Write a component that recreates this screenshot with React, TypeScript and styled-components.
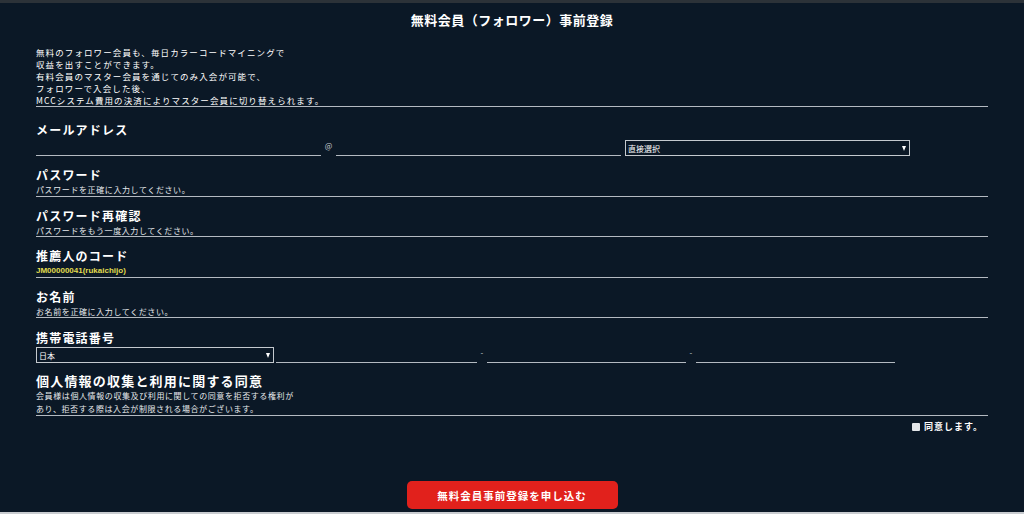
import styled, { createGlobalStyle } from "styled-components";

const GlobalStyle = createGlobalStyle`
   html, body {
      margin: 0;
      padding: 0;
      background: #0b1826;
   }
   body {
      font-family: "Noto Sans CJK JP", "Noto Sans", sans-serif;
      color: #ffffff;
   }
   * { box-sizing: border-box; }
`;

const Page = styled.div`
   height: 514px;
   background: #0b1826;
   border-top: 3px solid #2c3238;
   border-bottom: 2px solid #c9ccd0;
   display: flex;
   flex-direction: column;
   overflow: hidden;
`;

const Title = styled.h1`
   margin: 9px 0 0;
   text-align: center;
   font-size: 13px;
   line-height: 16px;
   font-weight: 700;
   letter-spacing: 0.5px;
`;

const Form = styled.div`
   padding: 0 36px;
   display: flex;
   flex-direction: column;
`;

const Intro = styled.p`
   margin: 18px 0 0;
   font-size: 8.5px;
   line-height: 12px;
   letter-spacing: 1.1px;
   border-bottom: 1px solid #b4bac1;
`;

const Field = styled.div<{ $top?: number; $line?: boolean }>`
   padding-top: ${p => p.$top ?? 12}px;
   border-bottom: ${p => (p.$line === false ? "none" : "1px solid #b4bac1")};
`;

const Label = styled.div<{ $size?: number }>`
   font-size: ${p => p.$size ?? 12}px;
   line-height: 14px;
   font-weight: 700;
   letter-spacing: 1.2px;
`;

const Sub = styled.div<{ $lh?: number }>`
   margin-top: 2px;
   font-size: 8px;
   line-height: ${p => p.$lh ?? 11.5}px;
   letter-spacing: 0.6px;
   color: #e6e9ec;
`;

const Code = styled.div`
   margin-top: 2px;
   font-family: "Liberation Sans", Arial, sans-serif;
   font-size: 8px;
   line-height: 11.5px;
   font-weight: 700;
   color: #e2dc4e;
`;

const InputRow = styled.div<{ $top?: number }>`
   display: flex;
   align-items: flex-end;
   margin-top: ${p => p.$top ?? 3}px;
`;

const Line = styled.div<{ $w: number }>`
   width: ${p => p.$w}px;
   height: 15px;
   border-bottom: 1px solid #b4bac1;
`;

const Sep = styled.span<{ $w: number }>`
   width: ${p => p.$w}px;
   text-align: center;
   font-size: 8px;
   line-height: 12px;
   align-self: flex-start;
   color: #c8cdd2;
`;

const Select = styled.div<{ $w: number }>`
   width: ${p => p.$w}px;
   height: 16px;
   border: 1px solid #c4c9ce;
   display: flex;
   align-items: center;
   justify-content: space-between;
   padding: 0 3px 0 2px;
   font-size: 8px;
   color: #ffffff;
   background: #0b1826;
   &::after {
      content: "";
      border-left: 2.5px solid transparent;
      border-right: 2.5px solid transparent;
      border-top: 5px solid #ffffff;
   }
`;

const AgreeRow = styled.div`
   display: flex;
   justify-content: flex-end;
   align-items: center;
   gap: 4px;
   padding-right: 5px;
   margin-top: 4px;
   font-size: 9px;
   font-weight: 700;
   letter-spacing: 1px;
`;

const Box = styled.span`
   width: 8px;
   height: 8px;
   background: #e4e6e9;
   border-radius: 1px;
`;

const Footer = styled.div`
   flex: 1;
   display: flex;
   align-items: flex-end;
   justify-content: center;
   padding-bottom: 3px;
`;

const Submit = styled.button`
   width: 211px;
   height: 28px;
   border: none;
   border-radius: 5px;
   background: #e1211c;
   color: #ffffff;
   font-family: "Noto Sans CJK JP", sans-serif;
   font-size: 10.5px;
   font-weight: 700;
   letter-spacing: 1px;
`;

export default function App() {
   return <>
      <GlobalStyle />
      <Page>
         <Title>無料会員（フォロワー）事前登録</Title>
         <Form>
            <Intro>
               無料のフォロワー会員も、毎日カラーコードマイニングで<br />
               収益を出すことができます。<br />
               有料会員のマスター会員を通じてのみ入会が可能で、<br />
               フォロワーで入会した後、<br />
               MCCシステム費用の決済によりマスター会員に切り替えられます。
            </Intro>

            <Field $top={16} $line={false}>
               <Label>メールアドレス</Label>
               <InputRow>
                  <Line $w={285} />
                  <Sep $w={15}>@</Sep>
                  <Line $w={285} />
                  <Sep $w={4} />
                  <Select $w={285}>直接選択</Select>
               </InputRow>
            </Field>

            <Field $top={12}>
               <Label>パスワード</Label>
               <Sub>パスワードを正確に入力してください。</Sub>
            </Field>

            <Field>
               <Label>パスワード再確認</Label>
               <Sub>パスワードをもう一度入力してください。</Sub>
            </Field>

            <Field>
               <Label>推薦人のコード</Label>
               <Code>JM00000041(rukaichijo)</Code>
            </Field>

            <Field>
               <Label>お名前</Label>
               <Sub>お名前を正確に入力してください。</Sub>
            </Field>

            <Field $top={13} $line={false}>
               <Label>携帯電話番号</Label>
               <InputRow $top={2}>
                  <Select $w={238}>日本</Select>
                  <Sep $w={2} />
                  <Line $w={201} />
                  <Sep $w={10}>-</Sep>
                  <Line $w={199} />
                  <Sep $w={10}>-</Sep>
                  <Line $w={199} />
               </InputRow>
            </Field>

            <Field $top={11}>
               <Label $size={13}>個人情報の収集と利用に関する同意</Label>
               <Sub $lh={12.5}>
                  会員様は個人情報の収集及び利用に関しての同意を拒否する権利が<br />
                  あり、拒否する際は入会が制限される場合がございます。
               </Sub>
            </Field>

            <AgreeRow>
               <Box />
               同意します。
            </AgreeRow>
         </Form>
         <Footer>
            <Submit>無料会員事前登録を申し込む</Submit>
         </Footer>
      </Page>
   </>;
}
